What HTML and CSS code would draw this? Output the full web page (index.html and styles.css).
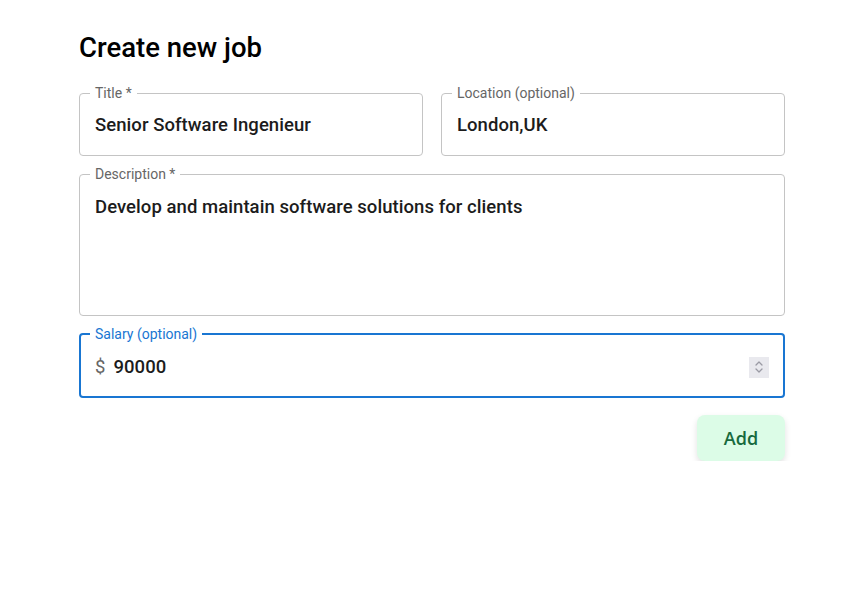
FILE: index.html
```html
<!DOCTYPE html>
<html lang="en">
<head>
<meta charset="utf-8">
<title>Create new job</title>
<link rel="stylesheet" href="styles.css">
</head>
<body>
<main class="page">
  <h1 class="heading">Create new job</h1>
  <form class="form">
    <div class="row">
      <fieldset class="field">
        <legend class="label">Title *</legend>
        <div class="value">Senior Software Ingenieur</div>
      </fieldset>
      <fieldset class="field">
        <legend class="label">Location (optional)</legend>
        <div class="value">London,UK</div>
      </fieldset>
    </div>
    <fieldset class="field field-multi">
      <legend class="label">Description *</legend>
      <div class="value value-multi">Develop and maintain software solutions for clients</div>
    </fieldset>
    <fieldset class="field field-focused">
      <legend class="label label-focused">Salary (optional)</legend>
      <div class="value value-salary">
        <span class="adorn">$</span>
        <span class="amount">90000</span>
        <span class="spinner">
          <svg width="10" height="14" viewBox="0 0 10 14" fill="none" stroke="#9a9aa4" stroke-width="1.3" stroke-linecap="round" stroke-linejoin="round">
            <path d="M2 5 L5 2 L8 5"/>
            <path d="M2 9 L5 12 L8 9"/>
          </svg>
        </span>
      </div>
    </fieldset>
    <div class="actions">
      <button type="button" class="btn-add">Add</button>
    </div>
  </form>
</main>
</body>
</html>
```
FILE: styles.css
```css
html, body {
  margin: 0;
  padding: 0;
  background: #ffffff;
}

body {
  font-family: Roboto, "Liberation Sans", sans-serif;
  color: #1a1a1a;
}

.page {
  width: 706px;
  margin: 0 0 0 79px;
  padding-top: 30px;
}

.heading {
  margin: 0 0 19px 0;
  font-size: 27.5px;
  line-height: 36px;
  font-weight: 500;
  color: #000;
}

.form {
  display: flex;
  flex-direction: column;
  gap: 10px;
}

.row {
  display: grid;
  grid-template-columns: 1fr 1fr;
  gap: 18px;
}

.field {
  margin: 0;
  min-width: 0;
  border: 1px solid #c4c4c4;
  border-radius: 4px;
  padding: 12px 10px 18px 10px;
}

.label {
  padding: 0 5px;
  font-size: 14px;
  line-height: 16px;
  color: #666666;
  font-weight: 400;
}

.value {
  padding-left: 5px;
  font-size: 18.5px;
  line-height: 24px;
  font-weight: 500;
  color: #1c1c1c;
  letter-spacing: 0.06px;
}

.field-multi {
  padding-top: 13px;
}

.value-multi {
  height: 102px;
}

.field-focused {
  border: 2px solid #1976d2;
  padding: 13px 9px 17px 9px;
}

.label-focused {
  color: #1976d2;
}

.value-salary {
  display: flex;
  align-items: center;
}

.adorn {
  color: #666666;
  font-weight: 400;
  margin-right: 8px;
}

.amount {
  flex: 1;
}

.spinner {
  width: 20px;
  height: 21px;
  background: #e9e9ee;
  display: flex;
  align-items: center;
  justify-content: center;
  margin-right: 5px;
}

.actions {
  display: flex;
  justify-content: flex-end;
  padding-top: 7px;
}

.btn-add {
  width: 88px;
  height: 46px;
  border: none;
  border-radius: 8px;
  background: #dcfce7;
  color: #176a3e;
  font-family: "Open Sans", "Noto Sans", sans-serif;
  font-size: 18px;
  font-weight: 600;
  box-shadow: 0 3px 6px rgba(0, 0, 0, 0.12);
  cursor: pointer;
}
```
